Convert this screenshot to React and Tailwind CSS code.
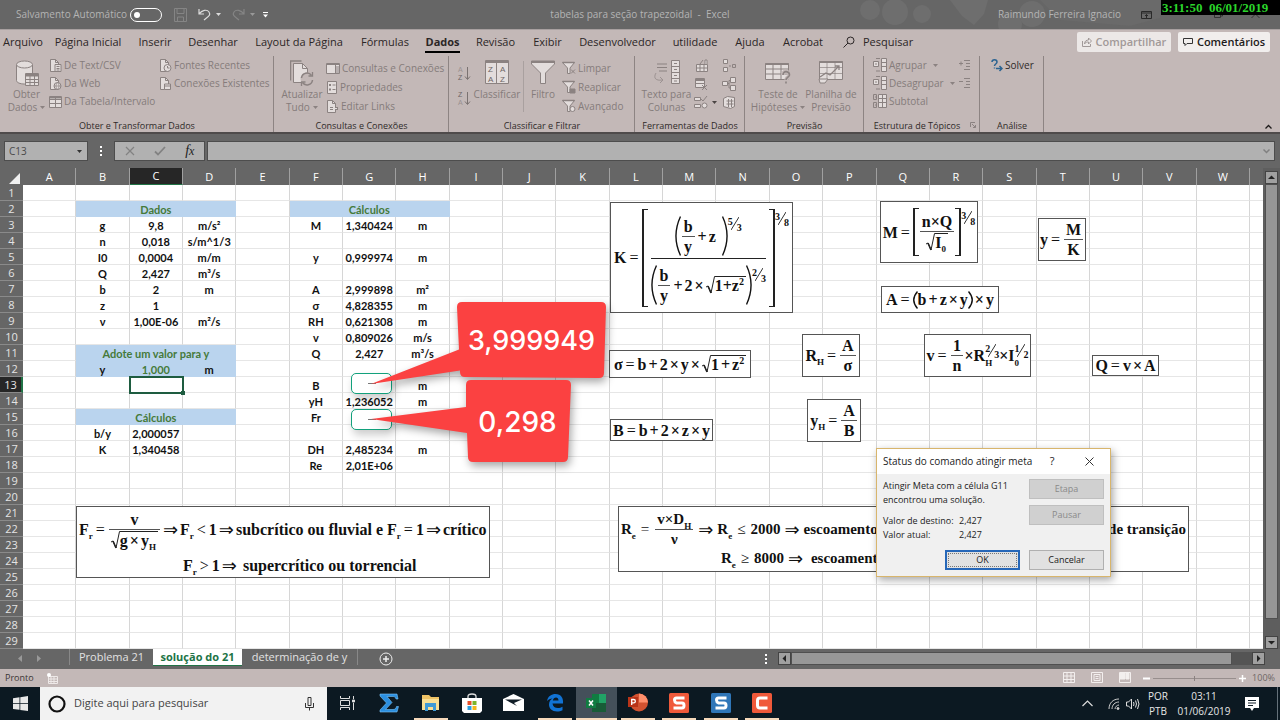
import React from "react";

const G = "#8b8281";
const L = "#e3dddc";

/* ---------- icons ---------- */

const Svg = ({ w = 14, h = 14, children, className = "" }) => (
  <svg width={w} height={h} viewBox={`0 0 ${w} ${h}`} fill="none" stroke={G} className={`shrink-0 ${className}`} aria-hidden="true">
    {children}
  </svg>
);

const Caret = ({ color = G }) => (
  <svg width="5" height="3" viewBox="0 0 5 3" className="shrink-0" aria-hidden="true"><path d="M0 0h5L2.500 3z" fill={color} /></svg>
);

const PageIcon = ({ children }) => (
  <Svg w={13} h={13}>
    <path d="M1.500 .5h5l3 3v9h-8z" fill={L} />
    <path d="M6.500 .5v3h3" />
    {children}
  </Svg>
);
const CsvIcon = () => <PageIcon><path d="M6 5.500h6v7H6z" fill={L} /><path d="M7.500 7.500h3M7.500 9.500h3M7.500 11h3" /></PageIcon>;
const WebIcon = () => <PageIcon><circle cx="8.500" cy="9" r="3.500" fill={L} /><path d="M5 9h7M8.500 5.500c-2 2-2 5 0 7M8.500 5.500c2 2 2 5 0 7" strokeWidth=".7" /></PageIcon>;
const RecentIcon = () => <PageIcon><circle cx="8.500" cy="9" r="3.500" fill={L} /><path d="M8.500 7v2h2" /></PageIcon>;
const ExistingIcon = () => <PageIcon><path d="M5.500 7h6v5.500h-6z" fill={L} /><path d="M5.500 9h6" /></PageIcon>;
const LinkIcon = () => <PageIcon><path d="M4 8.500h3M9 8.500h3" strokeWidth="3" /><path d="M4 8.500h7" stroke={L} /></PageIcon>;
const TableIcon = () => (
  <Svg w={13} h={13}><path d="M.5 1.500h12v11H.5z" fill={L} /><path d="M.5 4.500h12M.5 8.500h12M6.500 1.500v11" /><path d="M1 2.500h11" strokeWidth="2" /></Svg>
);
const QueriesIcon = () => <Svg w={14} h={13}><path d="M.5 1.500h13v10H.5z" fill={L} /><path d="M9.500 3v8M1 2.500h12" /><path d="M10 4h3v7h-3z" fill={G} stroke="none" opacity=".5" /></Svg>;
const PropsIcon = () => <Svg w={12} h={13}><path d="M1.500 .5h9v12h-9z" fill={L} /><path d="M3 4h2M3 8.500h2" strokeWidth="2" /><path d="M6.500 4h3M6.500 8.500h3" /></Svg>;

const DatabaseIcon = () => (
  <Svg w={24} h={26}>
    <path d="M1.500 4.500v16c0 2 3.500 3.500 8 3.500s8-1.500 8-3.500v-16" fill={L} />
    <ellipse cx="9.500" cy="4.500" rx="8" ry="3.500" fill={L} />
    <path d="M10.500 13.500h13v12h-13z" fill={L} /><path d="M11 15h12" strokeWidth="3" />
    <path d="M10.500 19.500h13M10.500 22.500h13M15 16v9M19.500 16v9" />
  </Svg>
);
const RefreshIcon = () => (
  <Svg w={24} h={26}>
    <path d="M.5 20.500V1h11" strokeWidth="1.500" />
    <path d="M3.500 3.500h9l5 5v14h-14z" fill={L} /><path d="M12.500 3.500v5h5" />
    <circle cx="17" cy="19" r="6.500" fill="#c3b8b7" stroke="none" />
    <path d="M11.500 18a5.500 5.500 0 0 1 10-2.500M22.500 20a5.500 5.500 0 0 1-10 2.500" strokeWidth="1.500" />
    <path d="M22.500 12v4h-4M11.500 26v-4h4" strokeWidth="1.300" />
  </Svg>
);
const SortIcon = ({ desc }) => (
  <svg width="14" height="17" viewBox="0 0 14 17" className="shrink-0" aria-hidden="true">
    <text x="1" y="7" fontSize="7" fontFamily="Liberation Sans" fill={desc ? "#6d6564" : "#9a9190"}>{desc ? "Z" : "A"}</text>
    <text x="1" y="15" fontSize="7" fontFamily="Liberation Sans" fill={desc ? "#9a9190" : "#6d6564"}>{desc ? "A" : "Z"}</text>
    <path d="M10.500 2v12M8 11.500l2.500 3 2.500-3" stroke="#7a7271" fill="none" />
  </svg>
);
const BigSortIcon = () => (
  <svg width="24" height="24" viewBox="0 0 24 24" aria-hidden="true">
    <path d="M.5 .5h23v23H.5z" fill={L} stroke={G} /><path d="M.5 2h23" stroke={G} strokeWidth="2" /><path d="M11.500 1v23" stroke={G} />
    <g fontSize="8" fontFamily="Liberation Sans" fill="#6d6564">
      <text x="3" y="12">Z</text><text x="3" y="22">A</text><text x="15" y="12">A</text><text x="15" y="22">Z</text>
    </g>
  </svg>
);
const FunnelIcon = () => <Svg w={24} h={24}><path d="M.5 1h23v3l-9 9v10.500h-5V13l-9-9z" fill={L} /><path d="M.5 2h23" strokeWidth="2" /></Svg>;
const SmallFunnel = ({ children }) => (
  <Svg w={14} h={14}><path d="M.5 1.500h12L8 7v5.500H5.500V7z" fill={L} /><path d="M.5 1.500h12" strokeWidth="1.500" />{children}</Svg>
);
const TextColsIcon = () => (
  <Svg w={26} h={24}>
    <path d="M3 4h10M3 7.500h10M5 11h8" /><path d="M2 13c-3 5 0 8 6 7M6 17l3 3-3 3" opacity=".7" />
    <path d="M17.500 .5h8v23h-8z" fill={L} /><path d="M17.500 6.500h8M17.500 12.500h8M17.500 18.500h8M20 3.500h3M20 9.500h3M20 15.500h3M20 21h3" />
  </Svg>
);
const WhatIfIcon = () => (
  <Svg w={26} h={24}><path d="M.5 3.500h23v16H.5z" fill={L} /><path d="M.5 4h23" strokeWidth="2" /><path d="M.5 9h23M.5 14h23M8 4v15M16 4v15" />
    <path d="M18 15c0-5 6.500-4 6.500 0 0 2-2.500 2.500-3 4v4" stroke="#c3b8b7" strokeWidth="4" /><path d="M18 15c0-5 6.500-4 6.500 0 0 2-3.500 2.500-3.500 5M21 21.500v2" strokeWidth="1.600" /></Svg>
);
const ForecastIcon = () => (
  <Svg w={26} h={24}><path d="M1.500 1.500h23v18h-23z" fill={L} /><path d="M1.500 2h23" strokeWidth="2" /><path d="M1.500 7.500h23M1.500 13.500h23M9 2v17M17 2v17" strokeWidth=".7" />
    <path d="M2 17l6-4 4 2 9-9M17 6h4v4" strokeWidth="1.300" /><path d="M1 19h9l-3 4H2z" fill={L} /></Svg>
);
const FlashFill = () => <Svg><path d="M2.500 5.500h11v7h-11z" fill={L} /><path d="M2 9h11M6 5v8M10 5v8M9 1l-3 4" /><path d="M11 5V1h2v4" fill={L} /></Svg>;
const RemoveDup = () => <Svg><path d="M1.500 1.500h9v9h-9z" fill={L} /><path d="M2 3h8" strokeWidth="2" /><path d="M2 6.500h8M8 8l5 5M13 8l-5 5" /></Svg>;
const Validate = () => <Svg><path d="M.5 2.500h6v3h-6zM.5 9.500h6v3h-6z" fill={L} /><path d="M7 4l2 2 4-5" /><circle cx="10.500" cy="10.500" r="2.500" fill={L} /></Svg>;
const Consolidate = () => <Svg><path d="M1.500 .5h4v4h-4zM1.500 8.500h4v4h-4z" fill={L} /><path d="M7 7h2M10.500 5.500h3v3h-3z" /></Svg>;
const Relations = () => <Svg><path d="M.5 4.500h5v4h-5zM8.500 .5h5v5h-5zM8.500 8.500h5v5h-5z" fill={L} /><path d="M5 6.500h2v-3h2M7 6v5h2" /></Svg>;
const ModelIcon = () => <Svg><path d="M1.500 3.500l4-2 7 1v9l-4 2-7-2z" fill={L} /><path d="M4.500 6h7M4.500 9h7M6.500 4v8M9.500 4v8" /></Svg>;
const GroupIcon = () => <Svg><path d="M.5 3.500h5v5h-5zM8.500 .5h5v13h-5z" fill={L} /><path d="M8.500 4.500h5M8.500 8.500h5M3 .5h4M3 13h4M2 6h2" /></Svg>;
const SubtotalIcon = () => <Svg><path d="M5.500 .5h8v13h-8z" fill={L} /><path d="M5.500 4.500h8M5.500 8.500h8M9.500 0v14M.5 .5h3v5h-3zM.5 8.500h3v5h-3zM2 3h2M2 11h2" /></Svg>;
const DetailIcon = ({ plus }) => <Svg w={12} h={12}><path d="M0 4.500h4M5 1.500h6M7 4.500h4M7 7.500h4M5 10.500h6" />{plus && <path d="M2 2.500v4" />}</Svg>;
const SolverIcon = () => (
  <svg width="12" height="13" viewBox="0 0 12 13" fill="none" stroke="#2b6391" strokeWidth="1.500" aria-hidden="true">
    <path d="M1 3c0-3 5-3 5 0 0 2-2.500 2-2.500 4M3.500 8.500v1M5 9.500h5M8.500 7l2.500 2.500L8.500 12" />
  </svg>
);

/* ---------- ribbon ---------- */

const Group = ({ label, width, children, launcher }) => (
  <section className={`${width} relative flex h-[76px] shrink-0 flex-col text-[10px] leading-[13px] text-[#857c7b]`}>
    <div className="flex flex-1 items-start">{children}</div>
    <div className="flex h-[14px] items-center justify-center text-[9px] text-[#2f2a29]">
      <span className="flex-1 text-center">{label}</span>
      {launcher && (
        <button aria-label="Mais opções" className="pr-1">
          <svg width="6" height="6" viewBox="0 0 6 6" fill="none" stroke={G}><path d="M.5 5V.5H5M2 2l3.500 3.500M5.500 3v2.500H3" /></svg>
        </button>
      )}
    </div>
    <span className="absolute bottom-0 right-0 top-0 w-px bg-[#8d8483]" />
  </section>
);

const Big = ({ icon, lines, width, caret, flush }) => (
  <button className={`${width} ${flush ? "" : "pl-1"} flex shrink-0 flex-col items-center pt-1`}>
    <span className="flex h-7 items-start">{icon}</span>
    {lines.map((t, i) => (
      <span key={t} className="flex items-center gap-[3px] whitespace-nowrap">
        {t}
        {caret && i === lines.length - 1 && <Caret />}
      </span>
    ))}
  </button>
);

const Item = ({ icon, children, caret }) => (
  <button className="flex h-[18px] items-center gap-[2px] whitespace-nowrap">
    {icon}
    <span>{children}</span>
    {caret && <span className="pl-1"><Caret /></span>}
  </button>
);

const tabs = [
  ["Arquivo", "w-[46px]"], ["Página Inicial", "w-[84px]"], ["Inserir", "w-[50px]"], ["Desenhar", "w-[66px]"],
  ["Layout da Página", "w-[106px]"], ["Fórmulas", "w-[66px]"], ["Dados", "w-[49px]"], ["Revisão", "w-[57px]"],
  ["Exibir", "w-[47px]"], ["Desenvolvedor", "w-[93px]"], ["utilidade", "w-[62px]"], ["Ajuda", "w-[48px]"], ["Acrobat", "w-[58px]"],
];

function TitleBar() {
  return (
    <header className="relative flex h-[29px] items-center bg-[#666] pl-4 text-[10px] text-[#b4b4b4]">
      <svg className="absolute right-0 top-0" width="440" height="29" viewBox="0 0 440 29" aria-hidden="true">
        <g fill="#6e6e6e">
          <circle cx="30" cy="10" r="10" /><circle cx="55" cy="12" r="13" /><circle cx="82" cy="14" r="9" />
          <path d="M110 0h38l-4 14-10 11-12-9z" /><circle cx="170" cy="24" r="12" /><circle cx="192" cy="14" r="13" />
          <path d="M200 0h120v18l-30 8-70-6z" opacity=".5" />
        </g>
      </svg>
      <label htmlFor="autosave" className="w-[109px] whitespace-nowrap">Salvamento Automático</label>
      <span className="relative ml-[5px] flex">
        <input id="autosave" type="checkbox" className="h-[14px] w-8 appearance-none rounded-full border border-white" />
        <span className="pointer-events-none absolute left-1 top-1 size-[6px] rounded-full bg-white" />
      </span>
      <div className="flex items-center pl-3">
        <button aria-label="Salvar"><Svg w={13} h={14}><path d="M.5 .5h12v13H.5zM3 .5v5h7v-5M3.500 13V9h6v4" stroke="#858585" /></Svg></button>
        <button aria-label="Desfazer" className="ml-[11px] flex items-center gap-[5px]">
          <svg width="13" height="13" viewBox="0 0 13 13" fill="none" stroke="#dcdcdc" strokeWidth="1.200"><path d="M1 1v5h5M1 6c3-4 8-5 10-2s0 4-5 8" /></svg>
          <Caret color="#dcdcdc" />
        </button>
        <button aria-label="Refazer" className="ml-[11px] flex items-center gap-[5px]">
          <svg width="13" height="13" viewBox="0 0 13 13" fill="none" stroke="#858585" strokeWidth="1.200"><path d="M12 1v5H7M12 6C9 2 4 1 2 4s0 4 5 8" /></svg>
          <Caret color="#999" />
        </button>
        <button aria-label="Personalizar" className="ml-2"><svg width="5" height="6" viewBox="0 0 5 6" fill="#fff"><path d="M0 0h5v1H0zM0 2.500h5L2.500 5.500z" /></svg></button>
      </div>
      <h1 className="absolute left-1/2 -translate-x-1/2 whitespace-pre">tabelas para seção trapezoidal  -  Excel</h1>
      <span className="relative ml-auto whitespace-nowrap">Raimundo Ferreira Ignacio</span>
      <button aria-label="Opções da faixa" className="relative ml-5 mr-[128px]">
        <svg width="11" height="8" viewBox="0 0 11 8" fill="none" stroke="#2a2a2a"><path d="M.5 .5h10v7H.5zM.5 2h10M5.500 7V3.500M4 5l1.500-1.500L7 5" /></svg>
      </button>
      <div className="absolute right-5 top-[10px] flex gap-7">
        <svg width="9" height="8" viewBox="0 0 9 8" fill="none" stroke="#333"><path d="M.5 2.500h6v5h-6zM2 2V.5h6.500V6H7" /></svg>
        <svg width="9" height="8" viewBox="0 0 9 8" fill="none" stroke="#333"><path d="M.5 0l8 8M8.500 0l-8 8" /></svg>
      </div>
      <div className="absolute right-0 top-0 h-[15px] w-[119px] whitespace-pre bg-black pl-px font-['Liberation_Serif',serif] text-[13px] font-bold leading-[15px] text-[#2bd52b]">3:11:50  06/01/2019</div>
    </header>
  );
}

function TabBar() {
  return (
    <nav className="flex h-[25px] items-center border-t border-[#a8a0a0] text-[11px] text-[#2b2626]">
      {tabs.map(([t, w]) => (
        <button key={t} className={`${w} flex h-6 shrink-0 justify-center whitespace-nowrap leading-[23px]`}>
          <span className={t === "Dados" ? "h-[23px] border-b-2 border-black font-bold" : ""}>{t}</span>
        </button>
      ))}
      <button className="flex items-center gap-2 pl-[11px]">
        <svg width="12" height="12" viewBox="0 0 12 12" fill="none" stroke="#2b2626"><circle cx="7.500" cy="4.500" r="3.500" /><path d="M5 7L.5 11.500" /></svg>
        Pesquisar
      </button>
      <div className="ml-auto flex gap-[7px] pr-[10px] font-semibold">
        <button className="flex h-5 w-[94px] items-center justify-center gap-1 rounded-xs bg-[#ece8e7] text-[#a19998]">
          <svg width="10" height="10" viewBox="0 0 10 10" fill="none" stroke="#a19998"><path d="M.5 4v5.500h8V7M2.500 7c0-3 2-4 4-4V1l3 3-3 3V5c-2 0-3 0-4 2z" /></svg>
          Compartilhar
        </button>
        <button className="flex h-5 w-[92px] items-center justify-center gap-1 rounded-xs bg-[#f1eeed] text-[#1d1a1a]">
          <svg width="10" height="10" viewBox="0 0 10 10" fill="none" stroke="#333"><path d="M.5 1.500h9v5H4l-2 2v-2H.5z" /></svg>
          Comentários
        </button>
      </div>
    </nav>
  );
}

function Ribbon() {
  return (
    <div className="flex h-[80px] items-start border-b-2 border-[#4f4b4b] pt-[2px]">
      <Group label="Obter e Transformar Dados" width="w-[274px]">
        <Big icon={<DatabaseIcon />} lines={["Obter", "Dados"]} width="w-[49px]" caret />
        <div className="flex w-[110px] flex-col">
          <Item icon={<CsvIcon />}>De Text/CSV</Item>
          <Item icon={<WebIcon />}>Da Web</Item>
          <Item icon={<TableIcon />}>Da Tabela/Intervalo</Item>
        </div>
        <div className="flex flex-col">
          <Item icon={<RecentIcon />}>Fontes Recentes</Item>
          <Item icon={<ExistingIcon />}>Conexões Existentes</Item>
        </div>
      </Group>
      <Group label="Consultas e Conexões" width="w-[175px]">
        <Big icon={<RefreshIcon />} lines={["Atualizar", "Tudo"]} width="w-[52px]" caret />
        <div className="flex flex-col gap-px pt-[3px]">
          <Item icon={<QueriesIcon />}>Consultas e Conexões</Item>
          <Item icon={<PropsIcon />}>Propriedades</Item>
          <Item icon={<LinkIcon />}>Editar Links</Item>
        </div>
      </Group>
      <Group label="Classificar e Filtrar" width="w-[186px]">
        <div className="flex flex-col gap-2 pl-2 pt-[9px]">
          <button aria-label="Classificar de A a Z"><SortIcon /></button>
          <button aria-label="Classificar de Z a A"><SortIcon desc /></button>
        </div>
        <Big icon={<BigSortIcon />} lines={["Classificar"]} width="w-[52px]" flush />
        <div className="mt-[5px] h-[51px] w-px bg-[#a9a09f]" />
        <Big icon={<FunnelIcon />} lines={["Filtro"]} width="w-[38px]" flush />
        <div className="flex flex-col gap-px pt-[3px]">
          <Item icon={<SmallFunnel><path d="M9 8.500l4 4M13 8.500l-4 4" /></SmallFunnel>}>Limpar</Item>
          <Item icon={<SmallFunnel><path d="M8 9h5v4H8z" fill={G} /></SmallFunnel>}>Reaplicar</Item>
          <Item icon={<SmallFunnel><circle cx="10.500" cy="10" r="2.500" fill={L} /></SmallFunnel>}>Avançado</Item>
        </div>
      </Group>
      <Group label="Ferramentas de Dados" width="w-[110px]">
        <Big icon={<TextColsIcon />} lines={["Texto para", "Colunas"]} width="w-[59px]" />
        <div className="grid grid-cols-[28px_14px] items-center pt-px">
          {[[<FlashFill />, "Preenchimento"], [<Consolidate />, "Consolidar"], [<RemoveDup />, "Remover"], [<Relations />, "Relações"], [<Validate />, "Validação"], [<ModelIcon />, "Modelo"]].map(([ic, n]) => (
            <button key={n} aria-label={n} className="flex h-[18px] items-center gap-1">{ic}{n === "Validação" && <Caret color="#4a4443" />}</button>
          ))}
        </div>
      </Group>
      <Group label="Previsão" width="w-[119px]">
        <Big icon={<WhatIfIcon />} lines={["Teste de", "Hipóteses"]} width="w-[66px]" caret flush />
        <Big icon={<ForecastIcon />} lines={["Planilha de", "Previsão"]} width="w-[40px]" flush />
      </Group>
      <Group label="Estrutura de Tópicos" width="w-[116px]" launcher>
        <div className="flex w-[95px] flex-col pl-[9px]">
          <Item icon={<GroupIcon />} caret>Agrupar</Item>
          <Item icon={<GroupIcon />} caret>Desagrupar</Item>
          <Item icon={<SubtotalIcon />}>Subtotal</Item>
        </div>
        <div className="flex flex-col">
          <button aria-label="Mostrar detalhe" className="flex h-[18px] items-center"><DetailIcon plus /></button>
          <button aria-label="Ocultar detalhe" className="flex h-[18px] items-center"><DetailIcon /></button>
        </div>
      </Group>
      <Group label="Análise" width="w-[64px]">
        <button className="flex h-[18px] items-center gap-[2px] pl-[11px] text-[#2f2a29]"><SolverIcon />Solver</button>
      </Group>
      <button aria-label="Recolher faixa" className="ml-auto mr-2 mt-[68px]">
        <svg width="7" height="5" viewBox="0 0 7 5" fill="none" stroke="#1d1a1a" strokeWidth="1.300"><path d="M.5 4.500l3-3 3 3" /></svg>
      </button>
    </div>
  );
}

function FormulaBar() {
  return (
    <div className="flex h-[34px] items-center bg-[#666] pl-1 pr-[5px]">
      <div className="flex h-5 w-[84px] items-center border border-[#4d4d4d] bg-[#b1b1b1] pr-[5px]">
        <input aria-label="Caixa de nome" defaultValue="C13" className="min-w-0 flex-1 bg-transparent pl-1 text-[10px] text-[#4a4a4a]" />
        <Caret color="#333" />
      </div>
      <svg width="3" height="11" viewBox="0 0 3 11" fill="#fff" className="ml-3" aria-hidden="true"><path d="M0 0h2v2H0zM0 4h2v2H0zM0 8h2v2H0z" /></svg>
      <div className="ml-[11px] flex h-5 w-[91px] items-center justify-around border border-[#4d4d4d] bg-[#b1b1b1]">
        <button aria-label="Cancelar edição"><svg width="10" height="10" viewBox="0 0 10 10" stroke="#828282" strokeWidth="1.200"><path d="M1 1l8 8M9 1L1 9" /></svg></button>
        <button aria-label="Inserir"><svg width="12" height="10" viewBox="0 0 12 10" fill="none" stroke="#828282" strokeWidth="1.800"><path d="M1 5.500l3 3L11 1" /></svg></button>
        <button aria-label="Inserir função" className="font-['Liberation_Serif',serif] text-[14px] italic leading-4 text-[#222]">f<span className="text-[12px]">x</span></button>
      </div>
      <div className="ml-[2px] flex h-5 flex-1 items-center border border-[#4d4d4d] bg-[#b1b1b1] pr-1">
        <input aria-label="Barra de fórmulas" className="min-w-0 flex-1 bg-transparent text-[10px]" />
        <svg width="7" height="5" viewBox="0 0 7 5" fill="none" stroke="#808080" strokeWidth="1.500"><path d="M.5 .5l3 3 3-3" /></svg>
      </div>
    </div>
  );
}

/* ---------- sheet ---------- */

const columns = "ABCDEFGHIJKLMNOPQRSTUVW".split("");
const left = {
  2: { title: "Dados" },
  3: ["g", "9,8", "m/s²"], 4: ["n", "0,018", "s/m^1/3"], 5: ["I0", "0,0004", "m/m"], 6: ["Q", "2,427", "m³/s"],
  7: ["b", "2", "m"], 8: ["z", "1", ""], 9: ["ν", "1,00E-06", "m²/s"],
  11: { title: "Adote um valor para y" }, 12: ["y", "1,000", "m"], 15: { title: "Cálculos" },
  16: ["b/y", "2,000057", ""], 17: ["K", "1,340458", ""],
};
const right = {
  2: { title: "Cálculos" },
  3: ["M", "1,340424", "m"], 5: ["y", "0,999974", "m"], 7: ["A", "2,999898", "m²"], 8: ["σ", "4,828355", "m"],
  9: ["RH", "0,621308", "m"], 10: ["v", "0,809026", "m/s"], 11: ["Q", "2,427", "m³/s"], 13: ["B", "", "m"],
  14: ["yH", "1,236052", "m"], 15: ["Fr", "", ""], 17: ["DH", "2,485234", "m"], 18: ["Re", "2,01E+06", ""],
};

const cellBase = "h-4 border-b border-r px-0 pb-0 text-center whitespace-nowrap";
const plain = `${cellBase} pt-[2px] leading-[13px] border-b-[#e6e6e6] border-r-[#d6d6d6]`;
const blue = `${cellBase} pt-[2px] leading-[13px] border-[#bad4ee] bg-[#bad4ee]`;
const cursor = `${cellBase} pt-0 leading-[15px] border-b-[#e6e6e6] border-r-[#d6d6d6]`;

const block = (data, r) => {
  const d = data[r];
  if (d && d.title) return [<td key={`t${r}`} colSpan={3} className={`${blue} text-[#457a3a]`}>{d.title}</td>];
  return [0, 1, 2].map((i) => {
    const tinted = data === left && r === 12;
    const selected = data === left && r === 13 && i === 1;
    return (
      <td key={`${r}-${i}`} className={selected ? cursor : tinted ? `${blue} ${i === 1 ? "text-[#457a3a]" : ""}` : plain}>
        {selected ? (
          <span className="relative block h-[15px]">
            <span className="absolute -bottom-[2px] -left-[1px] -right-[2px] -top-[1px] border-2 border-[#1e5c40]" />
            <span className="absolute -bottom-[3px] -right-[3px] size-[4px] bg-[#1e5c40]" />
          </span>
        ) : d ? d[i] : ""}
      </td>
    );
  });
};

function Grid() {
  return (
    <table className="w-full table-fixed border-separate border-spacing-0 bg-white font-['Lato','Open_Sans',sans-serif] text-[11px] font-bold text-[#111]">
      <colgroup><col className="w-[23px]" />{columns.map((c) => <col key={c} />)}<col className="w-[13px]" /></colgroup>
      <thead className="font-['Open_Sans',sans-serif] text-white">
        <tr className="h-[17px]">
          <th className="bg-[#666] p-0"><svg width="11" height="11" viewBox="0 0 11 11" className="ml-[9px] mt-1" aria-hidden="true"><path d="M11 0v11H0z" fill="#f0f0f0" /></svg></th>
          {columns.map((c) => (
            <th key={c} scope="col" className={`h-[17px] border-r border-[#a0a0a0] p-0 font-normal ${c === "C" ? "border-b border-b-[#217346] bg-[#262626] leading-4" : "bg-[#666] leading-[17px]"}`}>{c}</th>
          ))}
          <th className="bg-[#666] p-0" />
        </tr>
      </thead>
      <tbody>
        {Array.from({ length: 29 }, (_, k) => k + 1).map((r) => (
          <tr key={r} className="h-4">
            <th scope="row" className={`h-4 border-b border-[#8a8a8a] px-0 pb-0 pt-px font-['Open_Sans',sans-serif] font-normal leading-[14px] text-[#e4e4e4] ${r === 13 ? "border-r-2 border-r-[#217346] bg-[#262626]" : "bg-[#666]"}`}>{r}</th>
            <td className={plain} />
            {block(left, r)}
            <td className={plain} />
            {block(right, r)}
            {columns.slice(8).map((c) => <td key={c} className={plain} />)}
            <td className="border-b border-[#e6e6e6] p-0" />
          </tr>
        ))}
      </tbody>
    </table>
  );
}

/* ---------- equations ---------- */

const Eq = ({ className, children }) => (
  <div className={`${className} absolute flex items-center justify-center whitespace-nowrap border border-[#555] bg-white font-['Liberation_Serif',serif] text-[16px] font-bold leading-[17px] text-[#111]`}>{children}</div>
);
const Rel = ({ children = "=", wide }) => <span className={`${wide ? "px-[5px]" : "px-[3px]"} font-normal`}>{children}</span>;
const Op = ({ children }) => <span className="px-[2px]">{children}</span>;
const Times = () => <Op>×</Op>;
const Plus = () => <Op>+</Op>;
const Implies = ({ wide }) => <span className={`${wide ? "px-[4px]" : "px-[2px]"} font-['DejaVu_Sans',sans-serif] text-[18px] font-normal`}>⇒</span>;
const Frac = ({ n, d }) => (
  <span className="mx-px inline-flex flex-col items-center">
    <span className="flex items-center justify-center self-stretch border-b border-[#555] px-[2px] pb-px">{n}</span>
    <span className="flex items-center justify-center px-[2px] pt-px">{d}</span>
  </span>
);
const Root = ({ children }) => (
  <span className="inline-flex items-stretch">
    <svg width="9" height="18" viewBox="0 0 9 18" fill="none" stroke="#222" className="shrink-0" aria-hidden="true"><path d="M0 11l2-1 3 7L8.500 .5H9" /><path d="M2 10l3 7" strokeWidth="1.600" /></svg>
    <span className="flex items-center border-t border-[#222] pr-[2px]">{children}</span>
  </span>
);
const Power = ({ n, d }) => (
  <span className="inline-flex items-start text-[10px] leading-[9px]">
    <span>{n}</span>
    <svg width="8" height="14" viewBox="0 0 8 14" stroke="#333" className="-mx-[2px]" aria-hidden="true"><path d="M0 13L8 0" /></svg>
    <span className="pt-[6px]">{d}</span>
  </span>
);
const Sup = ({ children }) => <span className="self-start text-[10px] leading-[10px]">{children}</span>;
const Sub = ({ children }) => <span className="-mb-[3px] self-end text-[9px] leading-[9px]">{children}</span>;
const Paren = ({ h, flip, w = 6 }) => (
  <svg width={w} height={h} viewBox={`0 0 ${w} ${h}`} fill="none" stroke="#111" strokeWidth="1.400" className="shrink-0" aria-hidden="true">
    <path d={flip ? `M.5 .5Q${w * 1.6} ${h / 2} .5 ${h - 0.5}` : `M${w - 0.5} .5Q${-w * 0.6} ${h / 2} ${w - 0.5} ${h - 0.5}`} />
  </svg>
);
const Bracket = ({ h, flip }) => <span className={`${h} w-[6px] shrink-0 border-y border-[#222] ${flip ? "border-r-2" : "border-l-2"}`} />;

function Equations() {
  return (
    <>
      <Eq className="left-[610px] top-[34px] h-[111px] w-[183px]">
        K<Rel /><Bracket h="h-[98px]" />
        <span className="inline-flex flex-col items-center px-[3px]">
          <span className="flex items-center justify-center self-stretch border-b border-[#222] pb-[2px] pt-[6px]">
            <Paren h={40} /><Frac n="b" d="y" /><Plus />z<span className="w-[6px]" /><Paren h={40} flip /><span className="-mt-[5px] self-start"><Power n="5" d="3" /></span>
          </span>
          <span className="flex items-center pt-[6px]">
            <Paren h={40} /><Frac n="b" d="y" /><Plus />2<Times /><Root>1+z<Sup>2</Sup></Root><Paren h={40} flip /><span className="-mt-[3px] self-start"><Power n="2" d="3" /></span>
          </span>
        </span>
        <Bracket h="h-[98px]" flip /><span className="self-start pt-[3px]"><Power n="3" d="8" /></span>
      </Eq>
      <Eq className="left-[880px] top-[33px] h-[62px] w-[98px]">
        M<Rel /><Bracket h="h-[48px]" />
        <Frac n={<>n×Q</>} d={<Root>I<Sub>0</Sub></Root>} />
        <Bracket h="h-[48px]" flip /><span className="self-start pt-[3px]"><Power n="3" d="8" /></span>
      </Eq>
      <Eq className="left-[1038px] top-[50px] h-[43px] w-[48px]">y<Rel /><Frac n="M" d="K" /></Eq>
      <Eq className="left-[881px] top-[118px] h-[27px] w-[118px]">A<Rel /><Paren h={18} w={5} />b<Plus />z<Times />y<Paren h={18} w={5} flip /><Times />y</Eq>
      <Eq className="left-[609px] top-[182px] h-[28px] w-[142px]">σ<Rel />b<Plus />2<Times />y<Times /><Root>1<Plus />z<Sup>2</Sup></Root></Eq>
      <Eq className="left-[802px] top-[166px] h-[43px] w-[58px]"><span className="flex">R<Sub>H</Sub></span><Rel /><Frac n="A" d="σ" /></Eq>
      <Eq className="left-[924px] top-[166px] h-[43px] w-[107px]">
        v<Rel /><Frac n="1" d="n" />×R
        <span className="flex flex-col"><Power n="2" d="3" /><span className="text-[9px] leading-[9px]">H</span></span>×I
        <span className="flex flex-col"><Power n="1" d="2" /><span className="text-[9px] leading-[9px]">0</span></span>
      </Eq>
      <Eq className="left-[1092px] top-[187px] h-[21px] w-[67px]">Q<Rel />v<Times />A</Eq>
      <Eq className="left-[610px] top-[251px] h-[22px] w-[103px]">B<Rel />b<Plus />2<Times />z<Times />y</Eq>
      <Eq className="left-[807px] top-[231px] h-[43px] w-[54px]"><span className="flex">y<Sub>H</Sub></span><Rel /><Frac n="A" d="B" /></Eq>

      <Eq className="left-[76px] top-[338px] h-[72px] w-[414px]">
        <div className="flex w-full flex-col gap-2 pl-[2px]">
          <div className="flex items-center">
            <span className="flex">F<Sub>r</Sub></span><Rel /><Frac n="v" d={<Root>g<Times />y<Sub>H</Sub></Root>} />
            <Implies /><span className="flex">F<Sub>r</Sub></span><Rel>&lt;</Rel>1<Implies />subcrítico ou fluvial e&nbsp;
            <span className="flex">F<Sub>r</Sub></span><Rel />1<Implies />crítico
          </div>
          <div className="flex pl-[104px]">F<Sub>r</Sub><Rel>&gt;</Rel>1<Implies />&nbsp;supercrítico ou torrencial</div>
        </div>
      </Eq>
      <Eq className="left-[618px] top-[338px] h-[66px] w-[571px]">
        <div className="flex w-full flex-col gap-[2px] px-[2px] text-[15px]">
          <div className="flex items-center">
            <span className="flex">R<Sub>e</Sub></span><Rel wide /><Frac n={<>v×D<Sub>H</Sub></>} d="ν" /><Implies wide /><span className="flex">R<Sub>e</Sub></span>
            <Rel wide>≤</Rel>2000<Implies wide />escoamento<span className="ml-auto">de transição</span>
          </div>
          <div className="flex pl-[100px]">R<Sub>e</Sub><Rel wide>≥</Rel>8000<Implies wide />&nbsp;escoamento</div>
        </div>
      </Eq>
    </>
  );
}

function Callouts() {
  return (
    <>
      {["top-[205px]", "top-[241px]"].map((t) => (
        <div key={t} className={`${t} absolute left-[351px] flex h-[21px] w-[41px] items-center justify-center rounded-[5px] border border-[#12a17c] bg-white shadow-[2px_5px_8px_rgba(0,0,0,0.2)]`}>
          <span className="h-px w-2 bg-[#777]" />
        </div>
      ))}
      <svg className="absolute left-[360px] top-[124px] drop-shadow-[2px_4px_4px_rgba(0,0,0,0.35)]" width="260" height="180" viewBox="360 292 260 180" aria-hidden="true">
        <path d="M462 302H601Q606 302 606 307L604 373Q604 378 599 378L465 377Q460 377 460 372V370.500L371 384L459 349.500L457 307Q457 302 462 302Z" fill="#fb4141" />
        <path d="M471 380H566Q571 380 571 385L568 457Q568 462 563 462H473Q468 462 468 457L467 433L371 419L466 407V385Q466 380 471 380Z" fill="#fb4141" />
      </svg>
      <div className="absolute left-[457px] top-[135px] flex h-[76px] w-[149px] items-center justify-center font-['Inter',sans-serif] text-[27px] font-medium text-white">3,999949</div>
      <div className="absolute left-[466px] top-[213px] flex h-[82px] w-[103px] items-center justify-center font-['Inter',sans-serif] text-[28px] font-medium text-white">0,298</div>
    </>
  );
}

function GoalDialog() {
  const btn = "h-5 w-[75px] border text-center leading-4";
  return (
    <div role="dialog" aria-labelledby="goal-title" className="absolute left-[876px] top-[280px] w-[235px] border border-[#d8b56c] bg-[#f0f0f0] text-[9px] text-[#222] shadow-[2px_3px_8px_rgba(0,0,0,0.35)]">
      <div className="flex h-[25px] items-center bg-white px-[6px] text-[10px]">
        <h2 id="goal-title" className="w-[165px] whitespace-nowrap">Status do comando atingir meta</h2>
        <button aria-label="Ajuda" className="w-[8px] text-[11px]">?</button>
        <button aria-label="Fechar" className="ml-auto pr-[10px]"><svg width="9" height="9" viewBox="0 0 9 9" stroke="#333"><path d="M.5 .5l8 8M8.500 .5l-8 8" /></svg></button>
      </div>
      <div className="flex justify-between px-[6px] pt-[5px]">
        <div className="whitespace-nowrap leading-[14px]">
          <p>Atingir Meta com a célula G11<br />encontrou uma solução.</p>
          <dl className="mt-[7px] grid grid-cols-[76px_auto]"><dt>Valor de destino:</dt><dd>2,427</dd><dt>Valor atual:</dt><dd>2,427</dd></dl>
        </div>
        <div className="flex flex-col gap-[6px]">
          <button className={`${btn} border-[#bfbfbf] bg-[#d0d0d0] text-[#8a8a8a]`}>Etapa</button>
          <button className={`${btn} border-[#bfbfbf] bg-[#d0d0d0] text-[#8a8a8a]`}>Pausar</button>
        </div>
      </div>
      <div className="flex justify-end gap-[9px] px-[6px] pb-[6px] pt-2">
        <button className={`${btn} border-2 border-[#2667b8] bg-[#e1e1e1] leading-[14px] outline-dotted outline-1 -outline-offset-4 outline-[#777]`}>OK</button>
        <button className={`${btn} border-[#b0b0b0] bg-[#e1e1e1]`}>Cancelar</button>
      </div>
    </div>
  );
}

const ScrollBtn = ({ d, label }) => (
  <button aria-label={label} className="flex size-[13px] shrink-0 items-center justify-center border border-[#444] bg-[#a0a0a0]">
    <svg width="7" height="7" viewBox="0 0 7 7" fill="#222"><path d={d} /></svg>
  </button>
);

/* ---------- bottom ---------- */

function SheetTabs() {
  return (
    <div className="flex h-5 items-start bg-[#666] text-[11px] leading-[13px] text-[#e2e2e2]">
      <div className="flex w-[69px] justify-start gap-[14px] pl-[18px] pt-[6px]">
        <svg width="5" height="7" viewBox="0 0 5 7" fill="#999"><path d="M4 0v7L0 3.500z" /></svg>
        <svg width="5" height="7" viewBox="0 0 5 7" fill="#999"><path d="M0 0v7l4-3.500z" /></svg>
      </div>
      <button className="h-4 w-[84px] whitespace-nowrap border-l border-[#888] pb-[2px]">Problema 21</button>
      <button className="h-[17px] w-[89px] whitespace-nowrap border-b border-[#217346] bg-white pb-[2px] font-bold text-[#217346]">solução do 21</button>
      <button className="h-4 w-[116px] whitespace-nowrap border-r border-[#888] pb-[2px]">determinação de y</button>
      <button aria-label="Nova planilha" className="ml-[21px] mt-[3px]"><svg width="14" height="14" viewBox="0 0 14 14" fill="none" stroke="#eee"><circle cx="7" cy="7" r="6" /><path d="M7 4v6M4 7h6" strokeWidth="1.500" /></svg></button>
      <div className="ml-auto flex w-[515px] items-center pt-[3px]">
        <svg width="3" height="10" viewBox="0 0 3 10" fill="#fff" className="mr-[10px]"><path d="M0 0h2v2H0zM0 4h2v2H0zM0 8h2v2H0z" /></svg>
        <ScrollBtn label="Rolar para a esquerda" d="M5 0v7L1.500 3.500z" />
        <div className="flex h-[13px] w-[461px] bg-[#545454]"><div className="w-[441px] border border-[#505050] bg-[#989898]" /></div>
        <ScrollBtn label="Rolar para a direita" d="M2 0v7l3.500-3.500z" />
      </div>
    </div>
  );
}

function StatusBar() {
  return (
    <div className="flex h-[18px] items-center pl-[5px] pr-[5px] text-[9px] text-[#3b3635]">
      <span className="w-[42px]">Pronto</span>
      <svg width="11" height="11" viewBox="0 0 11 11" fill="none" stroke="#eee9e8"><path d="M1.500 3.500h9v7h-9zM1 6h9M1 8.500h9M4 4v6M7 4v6" /><circle cx="2" cy="2" r="2" fill="#fff" stroke="none" /></svg>
      <div className="ml-auto flex items-center gap-4">
        <button aria-label="Normal"><svg width="12" height="12" viewBox="0 0 12 12" fill="none" stroke="#f3efee"><path d="M.5 .5h11v10H.5zM.5 4h11M.5 7.500h11M4 .5v10M8 .5v10" /></svg></button>
        <button aria-label="Layout da Página"><svg width="12" height="12" viewBox="0 0 12 12" fill="none" stroke="#f3efee"><path d="M.5 .5h11v10H.5zM3 2.500h6v6H3zM4.500 4.500h3M4.500 6.500h3" /></svg></button>
        <button aria-label="Quebra de página"><svg width="12" height="12" viewBox="0 0 12 12" fill="none" stroke="#f3efee"><path d="M.5 .5h11v10H.5z" /><path d="M1 1h5v6H1zM7 1h3v6H7z" fill="#f3efee" /></svg></button>
        <div className="flex items-center gap-[3px] text-[#6e6665]">
          <svg width="7" height="7" viewBox="0 0 7 7" stroke="#fff" strokeWidth="2" className="-ml-1"><path d="M0 3.500h7" /></svg>
          <input aria-label="Zoom" type="range" className="h-px w-[83px] appearance-none bg-[#978e8d] [&::-webkit-slider-thumb]:h-[5px] [&::-webkit-slider-thumb]:w-px [&::-webkit-slider-thumb]:appearance-none [&::-webkit-slider-thumb]:bg-[#8a8180]" />
          <svg width="7" height="7" viewBox="0 0 7 7" stroke="#fff" strokeWidth="1.500"><path d="M0 3.500h7M3.500 0v7" /></svg>
          <span className="w-[26px] text-right">100%</span>
        </div>
      </div>
    </div>
  );
}

const Letter = ({ bg, d }) => (
  <svg width="22" height="22" viewBox="0 0 22 22" fill="none"><rect x="1" y="1" width="20" height="20" rx="1.500" fill={bg} /><path d={d} stroke="#fff" strokeWidth="3" /></svg>
);
const sPath = "M16.500 6H8.500Q6.500 6 6.500 8T8.500 11H14Q16 11 16 13.500T14 16H5.500";
const apps = [
  ["Visão de Tarefas", <svg width="16" height="14" viewBox="0 0 16 14" fill="none" stroke="#ddd"><path d="M.5 0v2.500h9V0M.5 14v-2.500h9V14M.5 4.500h9v5h-9zM13.500 0v3M13.500 7v7" /><path d="M12.500 4h2v2h-2z" fill="#ddd" /></svg>],
  ["Somatório", <svg width="20" height="20" viewBox="0 0 20 20"><path d="M1 1h17l1 5h-2c-.5-2-1.500-2.500-3-2.500H8l5 6-6.500 7H14c2 0 3-1 3.500-3h2L18 19H1v-2l6.500-7L1 3z" fill="#2b8fe0" stroke="#7cc4f7" strokeWidth=".6" /></svg>],
  ["Explorador", <svg width="19" height="18" viewBox="0 0 19 18"><path d="M1 1h7l2 2h8v13H1z" fill="#eec366" /><path d="M1 5h17v11H1z" fill="#f9df94" /><path d="M4 17V9h11v8h-3v-4H7v4z" fill="#3f9ad6" /></svg>, true],
  ["Loja", <svg width="20" height="20" viewBox="0 0 20 20"><path d="M6 6V3.500Q6 1 10 1t4 2.500V6" fill="none" stroke="#ddd" strokeWidth="1.300" /><path d="M0 5h20v13l-2 2H2l-2-2z" fill="#fff" /><path d="M5.500 8h4v4h-4z" fill="#e8502a" /><path d="M10.500 8h4v4h-4z" fill="#7cb52b" /><path d="M5.500 13h4v4h-4z" fill="#2a9fe0" /><path d="M10.500 13h4v4h-4z" fill="#f5b81c" /></svg>],
  ["Email", <svg width="21" height="17" viewBox="0 0 21 17"><path d="M0 5l10.500-5L21 5v12H0z" fill="#fff" /><path d="M2 5.500h17L11 9l3 3z" fill="#101c26" /></svg>],
  ["Edge", <svg width="18" height="19" viewBox="0 0 18 19"><path d="M1 8C2 3 5.500 1 9.500 1 15 1 17.500 5 17 10.500H6.500c.3 3 2.500 4.500 5.500 4.500 1.800 0 3-.5 4.500-1.300v3.500C15 18 13 18.500 11 18.500 6 18.500 3 15.500 3 11.500c0-3 1.500-5 3.500-6C4 5.500 2.500 6.500 1 8zM6.800 7.500h5.700C12.500 5.500 11.500 4.500 10 4.500S7.200 5.500 6.800 7.500z" fill="#1173d4" /></svg>, true],
  ["Excel", <svg width="20" height="18" viewBox="0 0 20 18"><path d="M6 0h14v18H6z" fill="#21a366" /><path d="M6 9h14v9H6z" fill="#185c37" /><path d="M6 0h7v9H6z" fill="#107c41" /><path d="M0 4h10v10H0z" fill="#107c41" /><path d="M3 6.500l4 5M7 6.500l-4 5" stroke="#fff" strokeWidth="1.500" /></svg>, true, true],
  ["PowerPoint", <svg width="20" height="19" viewBox="0 0 20 19"><circle cx="11" cy="9.500" r="9" fill="#d35230" /><path d="M11 .5a9 9 0 0 1 9 9h-9z" fill="#ff8f6b" /><path d="M0 4h10v10H0z" fill="#b93418" /><path d="M3.700 12V6.500h2a1.600 1.600 0 0 1 0 3.300h-2" fill="none" stroke="#fff" strokeWidth="1.300" /></svg>, true],
  ["Snagit", <Letter bg="#f0593a" d={sPath} />, true],
  ["Snagit Editor", <Letter bg="#2f76b8" d={sPath} />, true],
  ["Camtasia", <Letter bg="#f0593a" d="M16.500 6H9Q6.500 6 6.500 8.500v5Q6.500 16 9 16h7.500" />, true],
];

function Taskbar() {
  return (
    <footer className="flex h-[33px] items-stretch bg-[#0c1922] text-[11px] text-[#e6e6e6]">
      <button aria-label="Iniciar" className="flex w-10 shrink-0 items-center justify-center">
        <svg width="15" height="15" viewBox="0 0 15 15" fill="#e8e8e8"><path d="M0 2.200L6.500 1.300v5.900H0zM7.300 1.200L15 0v7.200H7.300zM0 8h6.500v5.800L0 12.900zM7.300 8H15v7l-7.700-1.100z" /></svg>
      </button>
      <label className="flex w-[287px] shrink-0 items-center bg-[#f2f2f2] pl-2 pr-[13px]">
        <svg width="18" height="18" viewBox="0 0 18 18" fill="none" stroke="#111" strokeWidth="2.200"><circle cx="9" cy="9" r="7.500" /></svg>
        <input aria-label="Pesquisar no Windows" placeholder="Digite aqui para pesquisar" className="min-w-0 flex-1 bg-transparent pl-2 text-[11px] placeholder-[#444]" />
        <svg width="9" height="14" viewBox="0 0 9 14" fill="none" stroke="#333"><path d="M3 .5h3v8H3zM.5 6v4.500h8V6M4.500 11v2.500" /></svg>
      </label>
      <div className="flex w-[456px] shrink-0">
        {apps.map(([n, icon, open, active]) => (
          <button key={n} aria-label={n} className={`flex flex-1 flex-col items-center ${active ? "bg-[#44505a]" : ""}`}>
            <span className="flex flex-1 items-center">{icon}</span>
            <span className={`h-[2px] ${active ? "w-full" : "w-[34px]"} ${open ? "bg-[#f6d9bb]" : ""}`} />
          </button>
        ))}
      </div>
      <div className="ml-auto flex items-center text-center text-[10px] leading-[15px]">
        <svg width="11" height="7" viewBox="0 0 11 7" fill="none" stroke="#ddd" strokeWidth="1.200"><path d="M.5 6l5-5 5 5" /></svg>
        <svg width="12" height="12" viewBox="0 0 12 12" fill="none" stroke="#ccc" className="ml-[15px]"><path d="M1 11C1 5 5 1 11 1M4 11c0-4 3-7 7-7M7 11c0-2 2-4 4-4" /><circle cx="10" cy="10.500" r="1" fill="#ddd" /></svg>
        <svg width="14" height="12" viewBox="0 0 14 12" fill="none" stroke="#ddd" className="ml-[6px]"><path d="M.5 4h2l3-3v10l-3-3h-2zM7.500 4q1 2 0 4M9.500 2.500q2 3.500 0 7M11.500 1q3 5 0 10" /></svg>
        <div className="w-[36px]">POR<br />PTB</div>
        <div className="w-[56px] whitespace-nowrap">03:11<br />01/06/2019</div>
        <button aria-label="Notificações" className="ml-[13px] mr-[18px]"><svg width="14" height="14" viewBox="0 0 14 14"><path d="M0 0h14v11H9l-2 3-2-3H0z" fill="#fff" /><path d="M3 3.500h8M3 6h8M3 8.500h5" stroke="#14202a" /></svg></button>
        <span className="mr-[2px] h-[33px] w-px bg-[#65717a]" />
      </div>
    </footer>
  );
}

export default function App() {
  return (
    <div className="flex min-h-screen flex-col overflow-hidden bg-[#c3b8b7] font-['Open_Sans','Noto_Sans',sans-serif]">
      <TitleBar />
      <TabBar />
      <Ribbon />
      <FormulaBar />
      <main className="relative flex">
        <div className="min-w-0 flex-1"><Grid /></div>
        <div className="flex w-[17px] shrink-0 flex-col items-center bg-[#5e5e5e] pt-[3px]">
          <ScrollBtn label="Rolar para cima" d="M0 5h7L3.500 1.500z" />
          <div className="w-[13px] flex-1 border border-[#505050] bg-[#969696]" />
          <div className="h-[17px]" />
          <ScrollBtn label="Rolar para baixo" d="M0 2h7L3.500 5.500z" />
        </div>
        <Equations />
        <Callouts />
        <GoalDialog />
      </main>
      <SheetTabs />
      <StatusBar />
      <Taskbar />
    </div>
  );
}
